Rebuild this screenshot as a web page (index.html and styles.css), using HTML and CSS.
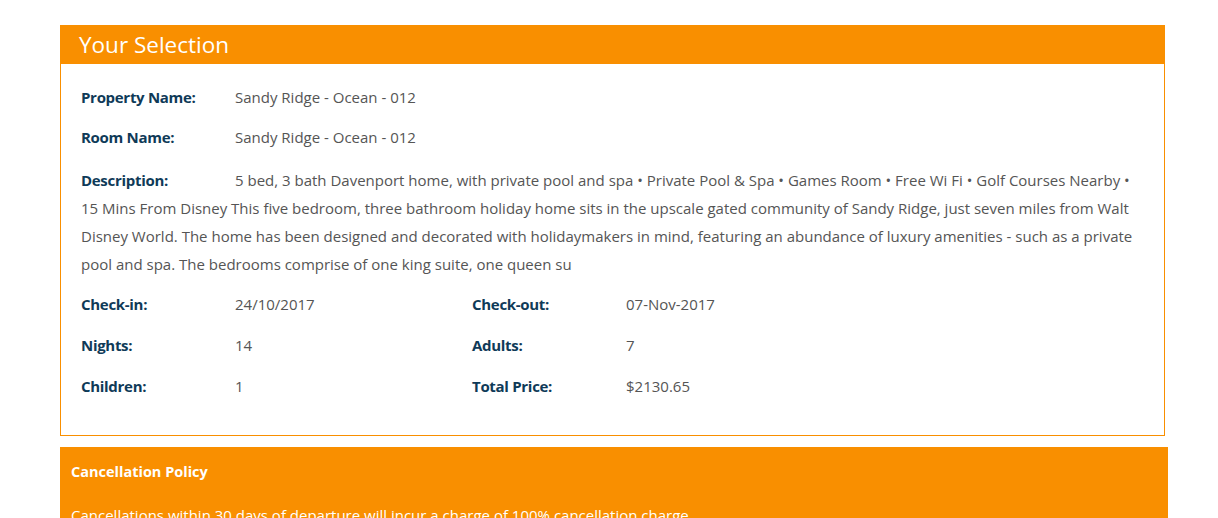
FILE: index.html
```html
<!DOCTYPE html>
<html lang="en">
<head>
  <meta charset="UTF-8" />
  <meta name="viewport" content="width=device-width, initial-scale=1.0" />
  <title>Your Selection</title>
  <link rel="stylesheet" href="styles.css">
</head>
<body>
  <div class="page">
    <div class="selection">
      <h2 class="selection-title">Your Selection</h2>
      <div class="selection-body">
        <div class="row">
          <span class="label">Property Name:</span><span class="value">Sandy Ridge - Ocean - 012</span>
        </div>
        <div class="row">
          <span class="label">Room Name:</span><span class="value">Sandy Ridge - Ocean - 012</span>
        </div>
        <p class="row description">
          <span class="label">Description:</span><span class="value">5 bed, 3 bath Davenport home, with private pool and spa &bull; Private Pool &amp; Spa &bull; Games Room &bull; Free Wi Fi &bull; Golf Courses Nearby &bull; 15 Mins From Disney This five bedroom, three bathroom holiday home sits in the upscale gated community of Sandy Ridge, just seven miles from Walt Disney World. The home has been designed and decorated with holidaymakers in mind, featuring an abundance of luxury amenities - such as a private pool and spa. The bedrooms comprise of one king suite, one queen su</span>
        </p>
        <div class="details">
          <div class="row">
            <span class="label">Check-in:</span><span class="value">24/10/2017</span>
          </div>
          <div class="row">
            <span class="label">Check-out:</span><span class="value">07-Nov-2017</span>
          </div>
          <div class="row">
            <span class="label">Nights:</span><span class="value">14</span>
          </div>
          <div class="row">
            <span class="label">Adults:</span><span class="value">7</span>
          </div>
          <div class="row">
            <span class="label">Children:</span><span class="value">1</span>
          </div>
          <div class="row">
            <span class="label">Total Price:</span><span class="value">$2130.65</span>
          </div>
        </div>
      </div>
    </div>

    <div class="policy">
      <h4 class="policy-title">Cancellation Policy</h4>
      <p class="policy-text">Cancellations within 30 days of departure will incur a charge of 100% cancellation charge.</p>
    </div>
  </div>
</body>
</html>
```

FILE: styles.css
```css
* {
  margin: 0;
  padding: 0;
  box-sizing: border-box;
}

body {
  background: #fff;
  font-family: 'Open Sans', sans-serif;
  font-size: 15px;
  color: #555;
}

.page {
  padding: 25px 0 0 60px;
}

.selection {
  width: 1105px;
  border: 1px solid #f98f00;
  border-top: none;
}

.selection-title {
  background: #f98f00;
  color: #fff;
  font-size: 22.5px;
  font-weight: 500;
  height: 39px;
  line-height: 39px;
  padding-left: 19px;
  margin: 0 -1px;
}

.selection-body {
  padding: 19px 20px 35px 20px;
}

.row {
  line-height: 28px;
  margin-bottom: 12px;
}

.row:nth-child(2) {
  margin-bottom: 15px;
}

.label {
  display: inline-block;
  width: 154px;
  font-weight: bold;
  letter-spacing: -0.3px;
  color: #0f3a58;
}

.value {
  color: #555;
}

.details {
  display: grid;
  grid-template-columns: 391px 1fr;
  row-gap: 13px;
}

.details .row {
  margin: 0;
}

.policy {
  width: 1108px;
  margin-top: 11px;
  background: #f98f00;
  color: #fff;
  padding: 15px 11px 20px 11px;
}

.policy-title {
  font-size: 14.5px;
  line-height: 20px;
  font-weight: bold;
}

.policy-text {
  margin-top: 23px;
  line-height: 20px;
}
```
